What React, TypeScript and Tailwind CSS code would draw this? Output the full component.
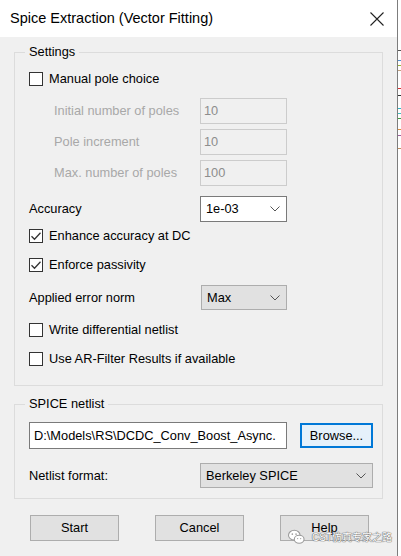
import type { ReactNode } from 'react'

const font = { fontFamily: '"Liberation Sans", Arial, sans-serif' }

function CheckBox({ checked, label }: { checked?: boolean; label: string }) {
  return (
    <div className="flex items-center h-[20px]">
      <span className="w-[14px] h-[14px] border border-[#333333] bg-white flex items-center justify-center">
        {checked && (
          <svg width="12" height="12" viewBox="0 0 12 12">
            <path d="M1.5 6.2 L4.5 9.2 L10.5 2.8" fill="none" stroke="#333333" strokeWidth="1.3" />
          </svg>
        )}
      </span>
      <span className="ml-[6px] text-[12.8px] text-black">{label}</span>
    </div>
  )
}

function Chevron() {
  return (
    <svg width="10" height="6" viewBox="0 0 10 6" className="shrink-0">
      <path d="M0.5 0.5 L5 5 L9.5 0.5" fill="none" stroke="#555555" strokeWidth="1" />
    </svg>
  )
}

function DisabledRow({ label, value }: { label: string; value: string }) {
  return (
    <div className="flex items-center h-[26px]">
      <span className="w-[171px] pl-[25px] text-[12.8px] text-[#a8a8a8]">{label}</span>
      <div className="w-[87px] h-full border border-[#cccccc] bg-[#f0f0f0] flex items-center px-[3px] text-[12.8px] text-[#8d8d8d]">
        {value}
      </div>
    </div>
  )
}

function Select({ value, white, width }: { value: string; white?: boolean; width: string }) {
  return (
    <div
      className={`${width} h-full flex items-center justify-between pl-[5px] pr-[6px] text-[12.8px] text-black border ${
        white ? 'bg-white border-[#7a7a7a]' : 'bg-[#e1e1e1] border-[#adadad]'
      }`}
    >
      <span>{value}</span>
      <Chevron />
    </div>
  )
}

function Group({ title, children, className }: { title: string; children: ReactNode; className?: string }) {
  return (
    <fieldset className={`border border-[#dcdcdc] mx-[14px] pl-[14px] ${className ?? ''}`}>
      <legend className="-ml-[4px] px-[4px] text-[12.8px] text-black leading-[16px]">{title}</legend>
      {children}
    </fieldset>
  )
}

function Button({ label }: { label: string }) {
  return (
    <div className="w-[89px] h-[26px] border border-[#adadad] bg-[#e1e1e1] flex items-center justify-center text-[12.8px] text-black">
      {label}
    </div>
  )
}

function WeChatIcon() {
  return (
    <svg width="19" height="16" viewBox="0 0 20 18">
      <ellipse cx="7.5" cy="7" rx="6.5" ry="5.5" fill="white" stroke="#9a9a9a" strokeWidth="1.2" />
      <ellipse cx="13" cy="11.5" rx="5.5" ry="4.5" fill="white" stroke="#9a9a9a" strokeWidth="1.2" />
      <circle cx="5.3" cy="5.8" r="0.9" fill="#9a9a9a" />
      <circle cx="9.5" cy="5.8" r="0.9" fill="#9a9a9a" />
      <circle cx="11.3" cy="10.8" r="0.7" fill="#9a9a9a" />
      <circle cx="14.7" cy="10.8" r="0.7" fill="#9a9a9a" />
    </svg>
  )
}

export default function App() {
  return (
    <div className="flex w-[401px] h-[556px] bg-white" style={font}>
      <div className="w-[397px] h-full bg-[#f0f0f0] flex flex-col relative">
        {/* title bar */}
        <div className="h-[37px] bg-white flex items-center justify-between pl-[10px] pr-[13px] shrink-0">
          <span className="text-[14.5px] text-black">Spice Extraction (Vector Fitting)</span>
          <svg width="14" height="14" viewBox="0 0 14 14">
            <path d="M0.5 0.5 L13.5 13.5 M13.5 0.5 L0.5 13.5" stroke="#222222" strokeWidth="1.1" />
          </svg>
        </div>

        <div className="pt-[7px] flex flex-col">
          <Group title="Settings" className="pt-[9px] pb-[16px]">
            <div className="flex flex-col">
              <CheckBox label="Manual pole choice" />
              <div className="mt-[9px]">
                <DisabledRow label="Initial number of poles" value="10" />
              </div>
              <div className="mt-[5px]">
                <DisabledRow label="Pole increment" value="10" />
              </div>
              <div className="mt-[5px]">
                <DisabledRow label="Max. number of poles" value="100" />
              </div>
              <div className="mt-[10px] flex items-center h-[26px]">
                <span className="w-[171px] text-[12.8px] text-black">Accuracy</span>
                <Select value="1e-03" white width="w-[87px]" />
              </div>
              <div className="mt-[4px]">
                <CheckBox checked label="Enhance accuracy at DC" />
              </div>
              <div className="mt-[9px]">
                <CheckBox checked label="Enforce passivity" />
              </div>
              <div className="mt-[10px] flex items-center h-[25px]">
                <span className="w-[172px] text-[12.8px] text-black">Applied error norm</span>
                <Select value="Max" width="w-[86px]" />
              </div>
              <div className="mt-[10px]">
                <CheckBox label="Write differential netlist" />
              </div>
              <div className="mt-[9px]">
                <CheckBox label="Use AR-Filter Results if available" />
              </div>
            </div>
          </Group>

          <Group title="SPICE netlist" className="mt-[10px] pb-[10px]">
            <div className="flex items-center h-[27px] mt-[10px]">
              <div className="w-[258px] h-full bg-white border border-[#7a7a7a] flex items-center px-[4px] text-[12.8px] text-black overflow-hidden whitespace-nowrap">
                D:\Models\RS\DCDC_Conv_Boost_Async.
              </div>
              <div className="ml-[13px] w-[73px] h-[25px] border-2 border-[#0078d7] bg-[#e5f1fb] flex items-center justify-center text-[12.8px] text-black">
                Browse...
              </div>
            </div>
            <div className="flex items-center h-[25px] mt-[14px]">
              <span className="w-[171px] text-[12.8px] text-black">Netlist format:</span>
              <Select value="Berkeley SPICE" width="w-[173px]" />
            </div>
          </Group>

          <div className="flex mt-[16px] pl-[30px] gap-[36px]">
            <Button label="Start" />
            <Button label="Cancel" />
            <Button label="Help" />
          </div>
        </div>

        {/* watermark */}
        <div className="absolute left-[287px] top-[529px] flex items-center">
          <WeChatIcon />
          <span
            className="ml-[6px] text-[10px] text-white whitespace-nowrap"
            style={{
              fontFamily: '"Liberation Sans", "Noto Sans CJK SC", sans-serif',
              textShadow: '0 0 1px #666, 0 0 1px #666, 0 0 1px #666',
            }}
          >
            CST仿真专家之路
          </span>
        </div>
      </div>

      {/* edge of the window behind */}
      <div className="w-[1px] h-full bg-[#7d7d7d]" />
      <div className="flex-1 h-full bg-white flex flex-col">
        <div className="h-[50px]" />
        <div className="h-[1px] bg-[#555555]" />
        <div className="h-[9px]" />
        <div className="h-[1px] bg-[#4f8fd0]" />
        <div className="h-[4px]" />
        <div className="h-[1px] bg-[#9ab53a]" />
        <div className="h-[4px]" />
        <div className="h-[1px] bg-[#c0a080]" />
        <div className="h-[17px]" />
        <div className="h-[1px] bg-[#e03030]" />
        <div className="h-[6px]" />
        <div className="h-[1px] bg-[#333333]" />
        <div className="h-[12px]" />
        <div className="h-[1px] bg-[#30b8c8]" />
        <div className="h-[4px]" />
        <div className="h-[1px] bg-[#40c0c0]" />
        <div className="h-[4px]" />
        <div className="h-[1px] bg-[#40a040]" />
        <div className="h-[10px]" />
        <div className="h-[1px] bg-[#e09040]" />
        <div className="h-[5px]" />
        <div className="h-[1px] bg-[#a060a0]" />
        <div className="h-[12px]" />
        <div className="h-[1px] bg-[#c09060]" />
      </div>
    </div>
  )
}
